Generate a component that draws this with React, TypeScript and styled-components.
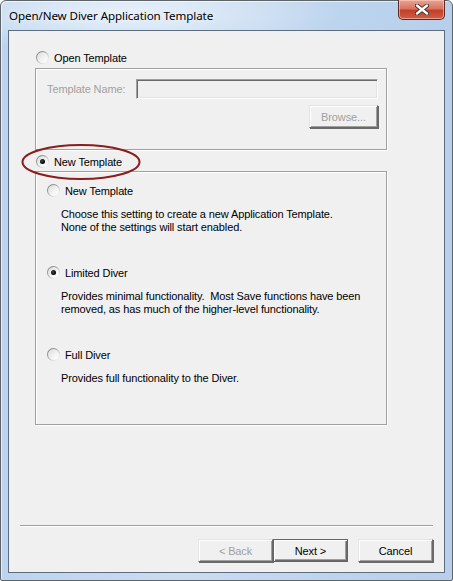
import styled, { createGlobalStyle } from 'styled-components';

const GlobalStyle = createGlobalStyle`
  html, body {
    margin: 0;
    padding: 0;
    background: #ffffff;
  }
  * {
    box-sizing: border-box;
  }
`;

const Window = styled.div`
  position: relative;
  width: 453px;
  height: 581px;
  display: flex;
  flex-direction: column;
  border: 1px solid #5f6468;
  border-radius: 6px 6px 2px 2px;
  background:
    radial-gradient(ellipse 220px 40px at 120px 12px, rgba(235, 243, 251, 0.9), rgba(235, 243, 251, 0) 100%),
    linear-gradient(90deg, #bcd4ee 0%, #c9dcf1 40%, #bed5ee 70%, #b7cfea 100%);
  box-shadow: inset 1px 1px 0 rgba(255, 255, 255, 0.6);
  font-family: "Liberation Sans", Arial, sans-serif;
  letter-spacing: -0.12px;
`;

const TitleBar = styled.div`
  height: 29px;
  display: flex;
  align-items: flex-start;
  justify-content: space-between;
  padding: 0 7px 0 8px;
`;

const TitleText = styled.div`
  margin-top: 7px;
  font-family: "Noto Sans", "Open Sans", sans-serif;
  font-size: 11.6px;
  letter-spacing: -0.1px;
  color: #000;
  text-shadow: 0 0 6px rgba(255, 255, 255, 0.9);
`;

const CloseButton = styled.div`
  width: 47px;
  height: 20px;
  margin-top: -1px;
  display: flex;
  align-items: center;
  justify-content: center;
  border: 1px solid #5b2a22;
  border-top: none;
  border-radius: 0 0 5px 5px;
  background: linear-gradient(180deg, #e8a593 0%, #d8745f 45%, #c2402a 55%, #cf5f45 100%);
  box-shadow: inset 0 0 0 1px rgba(255, 210, 200, 0.55);
`;

const Client = styled.div`
  flex: 1;
  margin: 0 7px 7px 7px;
  border: 1px solid #5d6d80;
  background: #f0f0f0;
  display: flex;
  flex-direction: column;
  position: relative;
`;

const Body = styled.div`
  padding: 20px 0 0 26px;
  display: flex;
  flex-direction: column;
  flex: 1;
`;

const RadioRow = styled.label<{ $indent?: number; $top?: number }>`
  display: flex;
  align-items: center;
  gap: 5px;
  height: 13px;
  margin-left: ${(p) => p.$indent ?? 1}px;
  margin-top: ${(p) => p.$top ?? 0}px;
  font-size: 11px;
  color: #000;
  white-space: nowrap;
`;

const RadioCircle = styled.span<{ $checked?: boolean }>`
  position: relative;
  width: 13px;
  height: 13px;
  border-radius: 50%;
  flex-shrink: 0;
  background: linear-gradient(135deg, #6f6f6f 0%, #a8a8a8 45%, #e4e4e4 75%, #ffffff 100%);
  &::before {
    content: '';
    position: absolute;
    inset: 1px;
    border-radius: 50%;
    background: linear-gradient(135deg, #dcdcdc 0%, #f4f4f4 60%, #ffffff 100%);
  }
  &::after {
    content: '';
    display: ${(p) => (p.$checked ? 'block' : 'none')};
    position: absolute;
    left: 4px;
    top: 4px;
    width: 5px;
    height: 5px;
    border-radius: 50%;
    background: radial-gradient(circle at 40% 40%, #444 0%, #000 70%);
  }
`;

const GroupBox = styled.div<{ $height: number; $top: number }>`
  width: 352px;
  height: ${(p) => p.$height}px;
  margin-top: ${(p) => p.$top}px;
  border: 1px solid #a0a0a0;
  box-shadow: inset 1px 1px 0 #ffffff, 1px 1px 0 #ffffff;
  display: flex;
  flex-direction: column;
`;

const NameRow = styled.div`
  display: flex;
  align-items: center;
  margin: 10px 0 0 11px;
`;

const DisabledLabel = styled.span`
  width: 89px;
  font-size: 11px;
  color: #a0a0a0;
  white-space: nowrap;
`;

const SunkenInput = styled.div`
  width: 242px;
  height: 20px;
  border-top: 1px solid #a0a0a0;
  border-left: 1px solid #a0a0a0;
  border-bottom: 1px solid #ffffff;
  border-right: 1px solid #ffffff;
  box-shadow: inset 1px 1px 0 #696969, inset -1px -1px 0 #e3e3e3;
  background: #f0f0f0;
`;

const BrowseRow = styled.div`
  display: flex;
  justify-content: flex-end;
  margin: 6px 8px 0 0;
`;

const Button = styled.div<{ $disabled?: boolean; $default?: boolean; $width?: number }>`
  width: ${(p) => p.$width ?? 75}px;
  height: 23px;
  display: flex;
  align-items: center;
  justify-content: center;
  font-size: 11px;
  color: ${(p) => (p.$disabled ? '#a0a0a0' : '#000')};
  background: #f0f0f0;
  border: 1px solid ${(p) => (p.$default ? '#646464' : '#e3e3e3')};
  box-shadow: ${(p) =>
    p.$default
      ? 'inset 1px 1px 0 #ffffff, inset -1px -1px 0 #696969, inset -2px -2px 0 #a0a0a0'
      : 'inset 1px 1px 0 #ffffff, inset -1px -1px 0 #a0a0a0, 1px 1px 0 #696969'};
  border-right-color: ${(p) => (p.$default ? '#646464' : '#696969')};
  border-bottom-color: ${(p) => (p.$default ? '#646464' : '#696969')};
`;

const OptionList = styled.div`
  display: flex;
  flex-direction: column;
  gap: 32px;
  padding: 12px 0 0 11px;
`;

const Option = styled.div`
  display: flex;
  flex-direction: column;
`;

const Description = styled.p`
  margin: 11px 0 0 14px;
  font-size: 11px;
  line-height: 13px;
  color: #000;
`;

const Footer = styled.div`
  padding: 0 11px 10px 11px;
  display: flex;
  flex-direction: column;
`;

const Separator = styled.div`
  height: 2px;
  border-top: 1px solid #a0a0a0;
  border-bottom: 1px solid #ffffff;
`;

const ButtonRow = styled.div`
  display: flex;
  justify-content: flex-end;
  margin-top: 12px;
`;

const Spacer = styled.div`
  width: 10px;
`;

const Highlight = styled.svg`
  position: absolute;
  left: 11px;
  top: 112px;
  pointer-events: none;
`;

const options = [
  {
    label: 'New Template',
    checked: false,
    text: ['Choose this setting to create a new Application Template.', 'None of the settings will start enabled.'],
  },
  {
    label: 'Limited Diver',
    checked: true,
    text: [
      'Provides minimal functionality.\u00a0 Most Save functions have been',
      'removed, as has much of the higher-level functionality.',
    ],
  },
  {
    label: 'Full Diver',
    checked: false,
    text: ['Provides full functionality to the Diver.'],
  },
];

export default function App() {
  return (
    <>
      <GlobalStyle />
      <Window>
        <TitleBar>
          <TitleText>Open/New Diver Application Template</TitleText>
          <CloseButton>
            <svg width="14" height="11" viewBox="0 0 14 11">
              <path
                d="M2 1.5 L12 9.5 M12 1.5 L2 9.5"
                stroke="#4a2a26"
                strokeWidth="4.2"
                strokeLinecap="round"
              />
              <path d="M2 1.5 L12 9.5 M12 1.5 L2 9.5" stroke="#ffffff" strokeWidth="2.4" strokeLinecap="round" />
            </svg>
          </CloseButton>
        </TitleBar>
        <Client>
          <Body>
            <RadioRow>
              <RadioCircle />
              Open Template
            </RadioRow>
            <GroupBox $height={82} $top={4}>
              <NameRow>
                <DisabledLabel>Template Name:</DisabledLabel>
                <SunkenInput />
              </NameRow>
              <BrowseRow>
                <Button $disabled $width={69}>
                  Browse...
                </Button>
              </BrowseRow>
            </GroupBox>
            <RadioRow $top={5}>
              <RadioCircle $checked />
              New Template
            </RadioRow>
            <GroupBox $height={254} $top={3}>
              <OptionList>
                {options.map((o) => (
                  <Option key={o.label}>
                    <RadioRow $indent={0}>
                      <RadioCircle $checked={o.checked} />
                      {o.label}
                    </RadioRow>
                    <Description>
                      {o.text.map((line, i) => (
                        <span key={i}>
                          {line}
                          {i < o.text.length - 1 && <br />}
                        </span>
                      ))}
                    </Description>
                  </Option>
                ))}
              </OptionList>
            </GroupBox>
          </Body>
          <Footer>
            <Separator />
            <ButtonRow>
              <Button $disabled>&lt; Back</Button>
              <Button $default>Next &gt;</Button>
              <Spacer />
              <Button>Cancel</Button>
            </ButtonRow>
          </Footer>
          <Highlight width="122" height="40" viewBox="0 0 122 40">
            <ellipse cx="61" cy="19" rx="58.5" ry="17" fill="none" stroke="#8a1d1d" strokeWidth="2" />
          </Highlight>
        </Client>
      </Window>
    </>
  );
}
